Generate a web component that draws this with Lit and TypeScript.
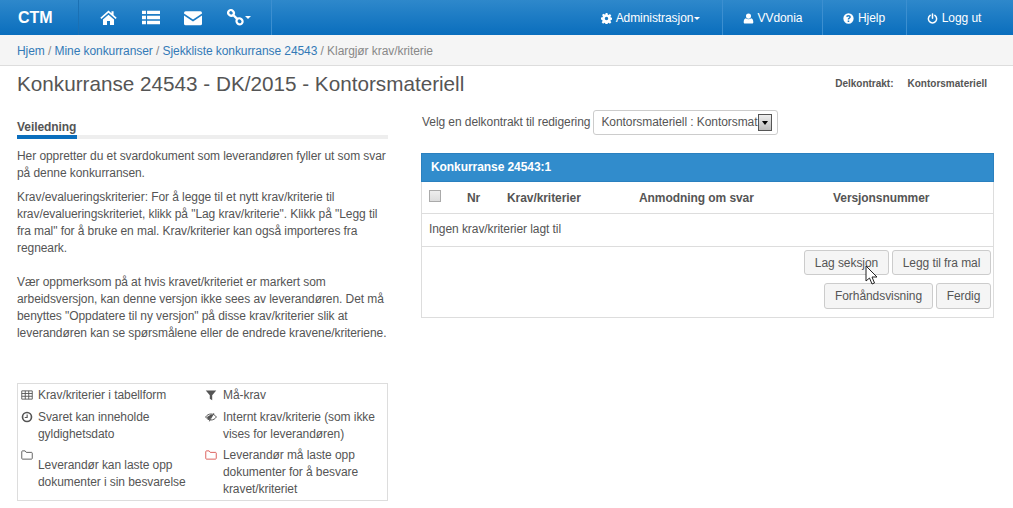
import { LitElement, html, css, svg } from "lit";
import { customElement } from "lit/decorators.js";

const ic = (d: any, cls = "", vb = "0 0 16 16") => html`<svg class="ic ${cls}" viewBox=${vb} aria-hidden="true">${d}</svg>`;
const home = ic(svg`<path fill="currentColor" d="M8 1.500 .3 8.200l1 1.100L8 3.600l6.700 5.700 1-1.100L12.800 5.700V2h-2v2L8 1.500zM2.800 9.800V15h3.800v-3.600h2.800V15h3.800V9.800L8 5.300z"/>`);
const list = ic(svg`<path fill="currentColor" d="M0 1.500h3.500v3H0zM4.500 1.500H16v3H4.500zM0 6h3.500v3H0zM4.500 6H16v3H4.500zM0 10.500h3.500v3H0zM4.500 10.500H16v3H4.500z"/>`);
const mail = ic(svg`<path fill="currentColor" d="M1.500 2h13A1.500 1.500 0 0 1 16 3.500v.6L8 9.300 0 4.100v-.6A1.500 1.500 0 0 1 1.500 2zM0 5.800l8 5.200 8-5.200v7.200a1.500 1.500 0 0 1-1.500 1.500h-13A1.500 1.500 0 0 1 0 13z"/>`);
const link = ic(svg`<g fill="none" stroke="currentColor" stroke-width="2.100"><ellipse cx="3.800" cy="3.600" rx="2.700" ry="2.500" transform="rotate(40 3.800 3.600)"/><ellipse cx="11.800" cy="11.600" rx="3" ry="2.700" transform="rotate(40 11.800 11.600)"/><path d="M6 5.800l3.500 3.500"/></g>`);
const gear = ic(svg`<path fill="currentColor" fill-rule="evenodd" d="M6.600 0h2.800l.4 2.200 1.300.6L13 1.500l2 2-1.300 1.900.6 1.300 2.200.4v2.800l-2.200.4-.6 1.300 1.300 1.900-2 2-1.900-1.300-1.300.6-.4 2.200H6.600l-.4-2.200-1.300-.6-1.900 1.300-2-2 1.300-1.900-.6-1.300L0 9.400V6.600l2.200-.4.6-1.300L1.500 3l2-2 1.900 1.300 1.300-.6zM8 5.500a2.500 2.500 0 1 0 0 5 2.500 2.500 0 0 0 0-5z"/>`);
const user = ic(svg`<circle cx="8" cy="4.500" r="3.700" fill="currentColor"/><path fill="currentColor" d="M4.200 7.500C2 8 1 10 1 13.500c0 1 .7 1.800 1.800 1.800h10.400c1.100 0 1.800-.8 1.800-1.800C15 10 14 8 11.800 7.500 10.900 8.400 9.600 9 8 9s-2.900-.6-3.800-1.500z"/>`);
const help = ic(svg`<path fill="currentColor" fill-rule="evenodd" d="M8 .5a7.500 7.500 0 1 0 0 15 7.500 7.500 0 0 0 0-15zM8 3c2 0 3.400 1.100 3.400 2.800 0 1.300-.8 1.900-1.600 2.400-.6.400-.8.600-.8 1.100v.3H6.900v-.5c0-1.100.5-1.700 1.300-2.200.6-.4 1-.6 1-1.100 0-.5-.5-.8-1.200-.8-.8 0-1.600.4-2.200 1L4.500 4.400C5.400 3.500 6.500 3 8 3zM6.800 10.800h2.300V13H6.800z"/>`);
const power = ic(svg`<g fill="none" stroke="currentColor" stroke-width="2.200" stroke-linecap="round"><path d="M4.600 3.500a6 6 0 1 0 6.800 0"/><path d="M8 1.300v6.500"/></g>`);
const table = ic(svg`<path fill="none" stroke="currentColor" stroke-width="1.200" d="M1 2.500h14v11H1zM1 6h14M1 9.700h14M5.700 2.500v11M10.300 2.500v11"/>`);
const filter = ic(svg`<path fill="currentColor" d="M1 2h14L9.600 8.300V15l-3.200-2V8.300z"/>`);
const clock = ic(svg`<circle cx="8" cy="8" r="6" fill="none" stroke="currentColor" stroke-width="2.200"/><path fill="none" stroke="currentColor" stroke-width="1.500" d="M8.200 4.500V8.600H5"/>`);
const eye = ic(svg`<path fill="none" stroke="currentColor" stroke-width="1.300" d="M.8 8C2.500 5.500 5 4 8 4s5.500 1.500 7.200 4c-1.700 2.500-4.200 4-7.200 4S2.500 10.500.8 8z"/><path fill="currentColor" d="M2.500 8 8 4.500 10.500 5 5.500 12 4 10.500zM11.500 2.500l1 .6-6.500 11-1-.6z"/>`);
const folder = ic(svg`<path fill="none" stroke="currentColor" stroke-width="1.200" d="M1 12.500v-9c0-.5.400-1 1-1h3.500l1.500 2h7c.6 0 1 .5 1 1v7c0 .6-.4 1-1 1H2c-.6 0-1-.4-1-1z"/>`);

@customElement("app-root")
export class AppRoot extends LitElement {
  static styles = css`
    :host { display: block; width: 1013px; height: 508px; overflow: hidden; position: relative; background: #fff; color: #555; font: 12px/17px "Liberation Sans", Arial, sans-serif; letter-spacing: -.07px; }
    * { box-sizing: border-box; }
    .ic { width: 1em; height: 1em; display: block; flex: none; }
    .nav { height: 35px; display: flex; background: linear-gradient(#2e88cb, #0a6ebd); color: #fff; }
    .brand { width: 79px; padding-left: 18px; font-size: 16px; font-weight: 700; line-height: 35px; letter-spacing: 0; border-right: 1px solid #1b70b3; }
    .tools { width: 193px; display: flex; align-items: center; border-right: 1px solid #3c8fd0; }
    .tools span { font-size: 17px; }
    .tools .home { margin-left: 21px; }
    .tools .list { margin-left: 25px; font-size: 18px; }
    .tools .mail { margin-left: 24px; font-size: 18px; }
    .tools .link { margin-left: 25px; }
    .caret { width: 0; height: 0; margin-left: -3px; border: 3.500px solid transparent; border-top: 3.500px solid currentColor; border-bottom: 0; }
    .tools .caret { margin-left: 1px; }
    .spacer { flex: 1; }
    .item { display: flex; align-items: center; justify-content: center; gap: 4px; padding-top: 1px; border-left: 1px solid #3c8fd0; }
    .item .ic { font-size: 11px; }
    .i-admin { width: 143px; border-left: 0; }
    .i-user { width: 100px; }
    .i-help { width: 84px; padding-right: 1px; }
    .i-out { width: 107px; padding-right: 12px; }
    .crumbs { height: 31px; background: #f5f5f5; border-bottom: 1px solid #ddd; padding: 8px 17px 0; color: #888; }
    .crumbs a { color: #337ab7; }
    .head { height: 37px; padding: 6px 26px 0 17px; display: flex; justify-content: space-between; }
    h1 { margin: 0; font-size: 20.700px; font-weight: 400; line-height: 24px; color: #555; letter-spacing: 0; }
    .meta { display: flex; gap: 14px; font-size: 10px; font-weight: 700; padding-top: 5px; line-height: 14px; letter-spacing: 0; }
    .body { display: flex; padding: 0 19px 0 17px; gap: 33px; }
    .left { width: 371px; flex: none; }
    .right { flex: 1; padding-top: 7px; }
    .tab { font-weight: 700; height: 15px; line-height: 15px; margin-top: 17px; }
    .rule { height: 4px; background: #eee; }
    .rule i { display: block; width: 60px; height: 4px; background: #0a6ebd; }
    p { margin: 0; }
    .p1 { margin-top: 9px; }
    .p2 { margin-top: 7px; }
    .p3 { margin-top: 17px; }
    .legend { margin-top: 41px; height: 118px; border: 1px solid #ddd; display: grid; grid-template-columns: 184px 1fr; grid-template-rows: 22px 38px 1fr; padding: 3px 0 0 3px; }
    .lg { display: flex; gap: 6px; padding-right: 6px; line-height: 17px; }
    .lg.l { gap: 5px; }
    .lg .ic { font-size: 12px; width: 12px; margin-top: 2px; }
    .lg.shift span { padding-top: 10px; }
    .lg .red { color: #d9534f; padding: 0; }
    .sel { display: flex; align-items: center; height: 25px; gap: 3px; padding-left: 1px; }
    .select { width: 185px; height: 25px; border: 1px solid #ccc; border-radius: 3px; display: flex; align-items: center; padding: 0 5px 0 7px; white-space: nowrap; background: #fff; }
    .select b { font-weight: 400; flex: 1; }
    .arrow { width: 14px; height: 17px; flex: none; border: 1px solid #555; background: linear-gradient(#eee, #bbb); display: flex; align-items: center; justify-content: center; }
    .arrow i { border: 3.500px solid transparent; border-top: 4px solid #000; border-bottom: 0; }
    .panel { margin-top: 18px; border: 1px solid #ddd; height: 165px; }
    .ph { margin: -1px -1px 0; height: 29px; background: #318ccc; border: 1px solid #2a80bf; color: #fff; font-weight: 700; line-height: 27px; padding-left: 9px; }
    .row { display: grid; grid-template-columns: 45px 40px 132px 194px 1fr; height: 32px; border-bottom: 1px solid #ddd; font-weight: 700; line-height: 33px; }
    .cb { width: 12px; height: 12px; margin: 8px 0 0 7px; border: 1px solid #aaa; background: linear-gradient(#eee, #ddd); }
    .empty { height: 33px; padding: 7px 7px; border-bottom: 1px solid #ddd; }
    .btns { display: flex; flex-direction: column; align-items: flex-end; gap: 8px; padding: 3px 2px 0 0; }
    .btns div { display: flex; gap: 3px; }
    button { font: inherit; color: #555; letter-spacing: inherit; height: 26px; padding: 0; white-space: nowrap; background: #f5f5f5; border: 1px solid #ccc; border-radius: 3px; line-height: 24px; }
    .short { height: 25px; }
    .w1 { width: 85px; } .w2 { width: 99px; } .w3 { width: 109px; } .w4 { width: 55px; }
    .cursor { position: absolute; left: 865px; top: 265px; width: 13px; height: 20px; }
  `;
  render() {
    return html`
      <div class="nav">
        <div class="brand">CTM</div>
        <div class="tools">
          <span class="home">${home}</span><span class="list">${list}</span><span class="mail">${mail}</span><span class="link">${link}</span><i class="caret"></i>
        </div>
        <div class="spacer"></div>
        <div class="item i-admin">${gear}<span>Administrasjon</span><i class="caret"></i></div>
        <div class="item i-user">${user}<span>VVdonia</span></div>
        <div class="item i-help">${help}<span>Hjelp</span></div>
        <div class="item i-out">${power}<span>Logg ut</span></div>
      </div>
      <div class="crumbs"><a>Hjem</a> / <a>Mine konkurranser</a> / <a>Sjekkliste konkurranse 24543</a> / Klargjør krav/kriterie</div>
      <div class="head">
        <h1>Konkurranse 24543 - DK/2015 - Kontorsmateriell</h1>
        <div class="meta"><span>Delkontrakt:</span><span>Kontorsmateriell</span></div>
      </div>
      <div class="body">
        <div class="left">
          <div class="tab">Veiledning</div>
          <div class="rule"><i></i></div>
          <p class="p1">Her oppretter du et svardokument som leverandøren fyller ut som svar på denne konkurransen.</p>
          <p class="p2">Krav/evalueringskriterier: For å legge til et nytt krav/kriterie til krav/evalueringskriteriet, klikk på "Lag krav/kriterie". Klikk på "Legg til fra mal" for å bruke en mal. Krav/kriterier kan også importeres fra regneark.</p>
          <p class="p3">Vær oppmerksom på at hvis kravet/kriteriet er markert som arbeidsversjon, kan denne versjon ikke sees av leverandøren. Det må benyttes "Oppdatere til ny versjon" på disse krav/kriterier slik at leverandøren kan se spørsmålene eller de endrede kravene/kriteriene.</p>
          <div class="legend">
            <div class="lg l">${table}<span>Krav/kriterier i tabellform</span></div>
            <div class="lg">${filter}<span>Må-krav</span></div>
            <div class="lg l">${clock}<span>Svaret kan inneholde gyldighetsdato</span></div>
            <div class="lg">${eye}<span>Internt krav/kriterie (som ikke vises for leverandøren)</span></div>
            <div class="lg l shift">${folder}<span>Leverandør kan laste opp dokumenter i sin besvarelse</span></div>
            <div class="lg"><span class="red">${folder}</span><span>Leverandør må laste opp dokumenter for å besvare kravet/kriteriet</span></div>
          </div>
        </div>
        <div class="right">
          <div class="sel"><span>Velg en delkontrakt til redigering</span>
            <div class="select"><b>Kontorsmateriell : Kontorsmat</b><span class="arrow"><i></i></span></div>
          </div>
          <div class="panel">
            <div class="ph">Konkurranse 24543:1</div>
            <div class="row"><span><div class="cb"></div></span><span>Nr</span><span>Krav/kriterier</span><span>Anmodning om svar</span><span>Versjonsnummer</span></div>
            <div class="empty">Ingen krav/kriterier lagt til</div>
            <div class="btns">
              <div><button class="w1 short">Lag seksjon</button><button class="w2 short">Legg til fra mal</button></div>
              <div><button class="w3">Forhåndsvisning</button><button class="w4">Ferdig</button></div>
            </div>
          </div>
        </div>
      </div>
      <svg class="cursor" viewBox="0 0 13 20" aria-hidden="true"><path d="M1 1v15l3.500-3 2.500 6 2.500-1-2.500-6h5z" fill="#fff" stroke="#222" stroke-width="1"/></svg>
    `;
  }
}
